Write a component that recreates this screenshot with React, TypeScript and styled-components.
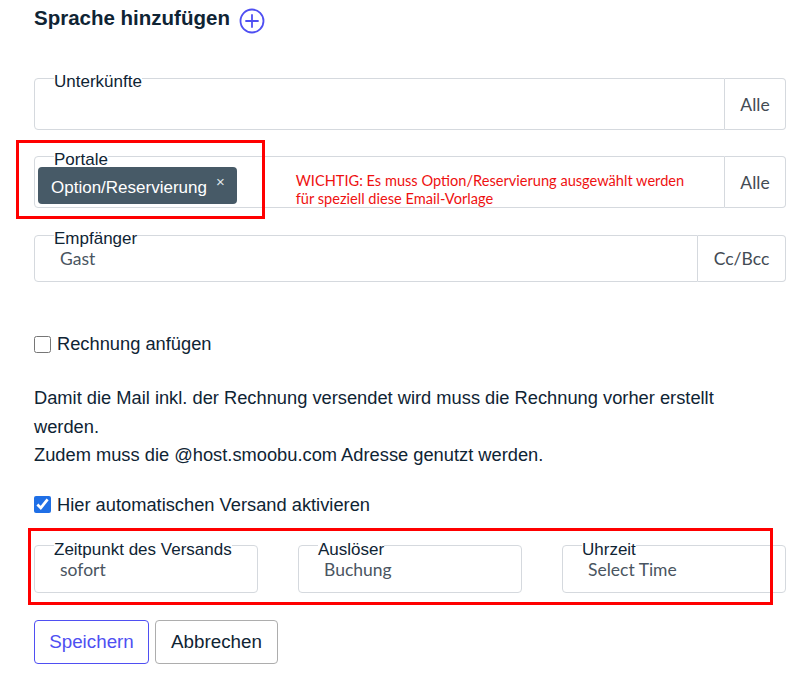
import React from 'react';
import styled, { createGlobalStyle } from 'styled-components';

const COLORS = {
  ink: '#0f2434',
  value: '#4a5561',
  border: '#d5d9de',
  blue: '#4f4ff2',
  chip: '#475a67',
  red: '#ee1111',
  mark: '#ff0000',
};

const GlobalStyle = createGlobalStyle`
  * { box-sizing: border-box; }
  body {
    margin: 0;
    background: #fff;
    font-family: 'Liberation Sans', Arial, sans-serif;
    color: ${COLORS.ink};
  }
`;

const PlusIcon = () => (
  <svg width="26" height="26" viewBox="0 0 26 26" fill="none">
    <circle cx="13" cy="13" r="11.5" stroke={COLORS.blue} strokeWidth="1.8" />
    <path d="M13 7v12M7 13h12" stroke={COLORS.blue} strokeWidth="1.8" strokeLinecap="round" />
  </svg>
);

const App: React.FC = () => {
  return (
    <Page>
      <GlobalStyle />
      <Header>
        <Title>Sprache hinzufügen</Title>
        <PlusIcon />
      </Header>

      <Group $mb={12}>
        <Field $joined>
          <Legend>Unterkünfte</Legend>
          <FieldBody $h={37} />
        </Field>
        <Append $w={61}>Alle</Append>
      </Group>

      <Group $mb={13}>
        <Field $joined>
          <Legend>Portale</Legend>
          <FieldBody $h={37} $pl={3}>
            <Chip>
              Option/Reservierung <span className="remove">×</span>
            </Chip>
            <Note>
              WICHTIG: Es muss Option/Reservierung ausgewählt werden
              <br />
              für speziell diese Email-Vorlage
            </Note>
          </FieldBody>
        </Field>
        <Append $w={61}>Alle</Append>
      </Group>

      <Group $mb={0}>
        <Field $joined>
          <Legend>Empfänger</Legend>
          <FieldBody $h={32} $pl={25}>
            <Value>Gast</Value>
          </FieldBody>
        </Field>
        <Append $w={88}>Cc/Bcc</Append>
      </Group>

      <CheckRow $mt={50}>
        <Check type="checkbox" readOnly />
        Rechnung anfügen
      </CheckRow>

      <Info>
        Damit die Mail inkl. der Rechnung versendet wird muss die Rechnung vorher erstellt werden.
        <br />
        Zudem muss die @host.smoobu.com Adresse genutzt werden.
      </Info>

      <CheckRow $mt={23}>
        <Check type="checkbox" checked readOnly />
        Hier automatischen Versand aktivieren
      </CheckRow>

      <TimingRow>
        <Field>
          <Legend>Zeitpunkt des Versands</Legend>
          <FieldBody $h={32} $pl={25}>
            <Value>sofort</Value>
          </FieldBody>
        </Field>
        <Field>
          <Legend>Auslöser</Legend>
          <FieldBody $h={32} $pl={25}>
            <Value>Buchung</Value>
          </FieldBody>
        </Field>
        <Field>
          <Legend>Uhrzeit</Legend>
          <FieldBody $h={32} $pl={25}>
            <Value>Select Time</Value>
          </FieldBody>
        </Field>
      </TimingRow>

      <Actions>
        <Button $primary $w={115}>Speichern</Button>
        <Button $w={123}>Abbrechen</Button>
      </Actions>

      {/* annotation frames drawn over the screenshot */}
      <Marker style={{ left: 16, top: 140, width: 249, height: 79 }} />
      <Marker style={{ left: 28, top: 528, width: 745, height: 77 }} />
    </Page>
  );
};

export default App;

const Page = styled.div`
  position: relative;
  width: 790px;
  height: 697px;
  padding: 0 4px 0 34px;
`;

const Header = styled.div`
  display: flex;
  align-items: center;
  gap: 9px;
  height: 36px;
  margin-bottom: 28px;

  svg {
    margin-top: 6px;
  }
`;

const Title = styled.h2`
  margin: 0;
  font-size: 20.5px;
  font-weight: 700;
  line-height: 24px;
  color: ${COLORS.ink};
`;

const Group = styled.div<{ $mb: number }>`
  display: flex;
  margin-bottom: ${(p) => p.$mb}px;
`;

const Field = styled.fieldset<{ $joined?: boolean }>`
  flex: 1;
  min-width: 0;
  margin: 0;
  padding: 0;
  border: 1px solid ${COLORS.border};
  border-radius: ${(p) => (p.$joined ? '4px 0 0 4px' : '4px')};
`;

const Legend = styled.legend`
  margin-left: 19px;
  padding: 8px 0 0;
  font-size: 17px;
  line-height: 20px;
  color: ${COLORS.ink};
`;

const FieldBody = styled.div<{ $h: number; $pl?: number }>`
  display: flex;
  align-items: flex-start;
  height: ${(p) => p.$h}px;
  padding-left: ${(p) => p.$pl ?? 0}px;
`;

const Value = styled.span`
  font-family: Lato, 'Liberation Sans', sans-serif;
  font-size: 17.5px;
  line-height: 20px;
  color: ${COLORS.value};
`;

const Append = styled.div<{ $w: number }>`
  display: flex;
  align-items: center;
  justify-content: center;
  width: ${(p) => p.$w}px;
  margin-top: 14px;
  border: 1px solid ${COLORS.border};
  border-left: none;
  border-radius: 0 4px 4px 0;
  font-family: Lato, 'Liberation Sans', sans-serif;
  font-size: 17.5px;
  color: #434b54;
`;

const Chip = styled.div`
  display: flex;
  align-items: center;
  height: 37px;
  margin-top: -3px;
  padding: 4px 12px 0 13px;
  border-radius: 4px;
  background: ${COLORS.chip};
  color: #fff;
  font-size: 17px;
  white-space: nowrap;

  .remove {
    margin: -12px 0 0 9px;
    font-size: 15px;
    color: #dfe5ea;
  }
`;

const Note = styled.div`
  margin: 2px 0 0 59px;
  font-family: Lato, 'Liberation Sans', sans-serif;
  font-size: 14.6px;
  line-height: 18px;
  color: ${COLORS.red};
  white-space: nowrap;
`;

const CheckRow = styled.label<{ $mt: number }>`
  display: flex;
  align-items: center;
  gap: 6px;
  height: 24px;
  margin-top: ${(p) => p.$mt}px;
  font-size: 18.3px;
  color: ${COLORS.ink};
`;

const Check = styled.input`
  width: 17px;
  height: 17px;
  margin: 0;
  accent-color: #1f6fe6;
`;

const Info = styled.p`
  max-width: 700px;
  margin: 28px 0 0;
  font-size: 18.3px;
  line-height: 28.5px;
  color: ${COLORS.ink};
`;

const TimingRow = styled.div`
  display: grid;
  grid-template-columns: repeat(3, 224px);
  gap: 40px;
  margin-top: 15px;
`;

const Actions = styled.div`
  display: flex;
  gap: 6px;
  margin-top: 27px;
`;

const Button = styled.button<{ $primary?: boolean; $w: number }>`
  width: ${(p) => p.$w}px;
  height: 44px;
  padding: 0;
  border: 1px solid ${(p) => (p.$primary ? COLORS.blue : '#adadad')};
  border-radius: 4px;
  background: #fff;
  font-family: 'Liberation Sans', Arial, sans-serif;
  font-size: 18.8px;
  font-weight: 400;
  color: ${(p) => (p.$primary ? COLORS.blue : COLORS.ink)};
`;

const Marker = styled.div`
  position: absolute;
  border: 3px solid ${COLORS.mark};
  pointer-events: none;
`;
